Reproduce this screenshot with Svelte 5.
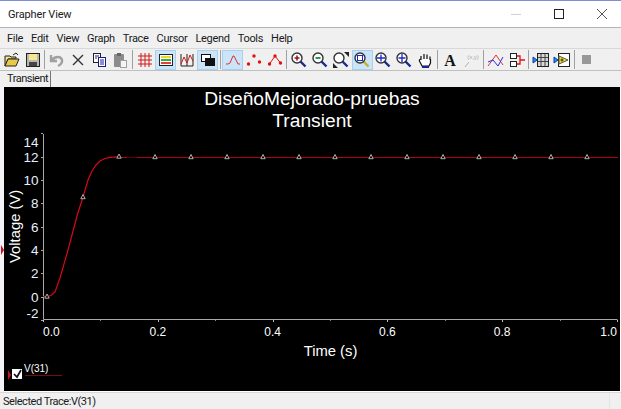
<script>
	const menus = ["File", "Edit", "View", "Graph", "Trace", "Cursor", "Legend", "Tools", "Help"]

	// null marks a separator
	const tools = [
		{ id: "open" }, { id: "save" }, null,
		{ id: "undo" }, { id: "cut" }, { id: "copy" }, { id: "paste" }, null,
		{ id: "grid" }, { id: "legend", on: true }, { id: "stack" }, { id: "overlay", on: true }, null,
		{ id: "line", on: true }, { id: "dots" }, { id: "both" }, null,
		{ id: "zoomin" }, { id: "zoomout" }, { id: "fit" }, { id: "zoombox", on: true }, { id: "zoomx" }, { id: "zoomy" }, { id: "hand" }, null,
		{ id: "text" }, { id: "xy" }, null,
		{ id: "traces" }, { id: "export" }, null,
		{ id: "table" }, { id: "wave" }, null,
		{ id: "stop" }
	]

	const x0 = 43, x1 = 617, y0 = 296.5, perVolt = 11.65
	const yTicks = [14, 12, 10, 8, 6, 4, 2, 0, -2]
	const xTicks = [0, 0.2, 0.4, 0.6, 0.8, 1]
	const xMinor = [0.1, 0.3, 0.5, 0.7, 0.9]
	const xPos = t => x0 + (x1 - x0) * t
	const yPos = v => y0 - v * perVolt

	const curve = "M43 296.5 L47 296.5 L51 295.5 L55 292 L60 278 L64 264 L68 250 L72 235 L77 216 L83 197 L88 180 L92 171 L96 165 L100 161 L105 158.5 L110 157.3 L118 156.8"
	const markers = [[47, 296.5], [83, 197], [119, 156.5]]
	for (let x = 155; x <= 587; x += 36) markers.push([x, 157])
</script>

<div class="window">
	<header class="titlebar">
		<span class="title">Grapher View</span>
		<div class="caption">
			<svg width="10" height="10" viewBox="0 0 10 10"><path d="M0 5.5H10" stroke="#d0d0d0" /></svg>
			<svg width="10" height="10" viewBox="0 0 10 10"><rect x="0.5" y="0.5" width="9" height="9" fill="none" stroke="#222" /></svg>
			<svg width="10" height="10" viewBox="0 0 10 10"><path d="M0 0L10 10M10 0L0 10" stroke="#555" /></svg>
		</div>
	</header>

	<nav class="menubar">
		{#each menus as m}
			<span>{m}</span>
		{/each}
	</nav>

	<div class="toolbar">
		{#each tools as t}
			{#if t === null}
				<i class="sep"></i>
			{:else}
				<button type="button" class:on={t.on}>
					<svg width="18" height="18" viewBox="0 0 18 18">
						{#if t.id === "open"}
							<path d="M2 5h5l1 1h5v2H5L2 15z" fill="#f2e28a" stroke="#222" />
							<path d="M5 8h11l-3 7H2z" fill="#e8c94a" stroke="#222" />
							<path d="M10 4l3-2 2 2" fill="none" stroke="#222" />
						{:else if t.id === "save"}
							<rect x="2.5" y="2.5" width="13" height="13" fill="#b8b8b0" stroke="#222" />
							<rect x="5" y="3" width="8" height="6" fill="#f4e890" />
							<rect x="5" y="11" width="8" height="4" fill="#444" />
						{:else if t.id === "undo"}
							<path d="M3 4v6h6M4 9c3-4 9-4 10 0 .6 3-2 5-4 6" fill="none" stroke="#a0a0a0" stroke-width="2.4" />
						{:else if t.id === "cut"}
							<path d="M4 4l10 10M14 4L4 14" stroke="#333" stroke-width="1.4" />
						{:else if t.id === "copy"}
							<rect x="3.5" y="2.5" width="7" height="9" fill="#fff" stroke="#222" />
							<rect x="8.5" y="6.5" width="7" height="9" fill="#fff" stroke="#1a1a90" />
							<path d="M10 9h4M10 11h4M10 13h4M5 5h4M5 7h2" stroke="#1a1a90" />
						{:else if t.id === "paste"}
							<rect x="3" y="3" width="10" height="13" rx="1" fill="#8c8c8c" />
							<rect x="6" y="2" width="4" height="3" fill="#666" />
							<rect x="9.5" y="9.5" width="6" height="7" fill="#f4f4f4" stroke="#a0a0a0" />
						{:else if t.id === "grid"}
							<path d="M5 2v14M9 2v14M13 2v14M2 5h14M2 9h14M2 13h14" stroke="#d01818" />
						{:else if t.id === "legend"}
							<rect x="2.5" y="3.5" width="13" height="11" fill="#fff" stroke="#222" />
							<rect x="4" y="5" width="10" height="2" fill="#e8d820" />
							<rect x="4" y="8" width="10" height="2" fill="#30b040" />
							<rect x="4" y="11" width="10" height="2" fill="#e04040" />
						{:else if t.id === "stack"}
							<path d="M3 3v12M9 3v12M15 3v12M3 15h12" stroke="#222" />
							<path d="M3 13l3-7 3 6 3-8 3 6" fill="none" stroke="#d01818" />
						{:else if t.id === "overlay"}
							<rect x="2.5" y="3.5" width="9" height="7" fill="#fff" stroke="#111" />
							<rect x="6" y="7" width="10" height="8" fill="#111" />
						{:else if t.id === "line"}
							<path d="M2 13h2l2-1 3-7 1 0 4 8h2" fill="none" stroke="#e03030" />
						{:else if t.id === "dots"}
							<g fill="#e01010"><circle cx="3.5" cy="13" r="1.7" /><circle cx="9" cy="5" r="1.7" /><circle cx="14.5" cy="11" r="1.7" /></g>
						{:else if t.id === "both"}
							<path d="M3.5 13L9 5l5.500 7" fill="none" stroke="#e01010" />
							<g fill="#e01010"><circle cx="3.5" cy="13" r="1.7" /><circle cx="9" cy="5" r="1.7" /><circle cx="14.500" cy="12" r="1.700" /></g>
						{:else if ["zoomin", "zoomout", "fit", "zoombox", "zoomx", "zoomy"].includes(t.id)}
							<path d="M10.500 10.500L15.500 15.500" stroke={t.id === "zoombox" ? "#c8b020" : "#1a2a90"} stroke-width="2.400" />
							<circle cx="7" cy="7" r="5" fill="#fff" stroke="#333" stroke-width="1.400" />
							{#if t.id === "zoomin"}
								<path d="M4.500 7h5M7 4.500v5" stroke="#a01030" stroke-width="1.600" />
							{:else if t.id === "zoomout"}
								<path d="M4.500 7h5" stroke="#109040" stroke-width="1.800" />
							{:else if t.id === "fit"}
								<path d="M12 1h5v5zM1 17v-5l5 5z" fill="#222" />
							{:else if t.id === "zoombox"}
								<rect x="4.500" y="4.500" width="5" height="5" fill="none" stroke="#1a2ad0" />
							{:else if t.id === "zoomx"}
								<path d="M3 7h8M7 3.500v7" stroke="#1a2ad0" stroke-width="1.300" />
							{:else}
								<path d="M7 3v8M3.500 7h7" stroke="#1a2ad0" stroke-width="1.300" />
							{/if}
						{:else if t.id === "hand"}
							<path d="M5 9V5M8 8V3M11 8V3.500M14 9V5.500M5 8c-2 0-2 2-1 3l2 4h7l1.500-3V8" fill="#fff" stroke="#111" stroke-width="1.200" />
							<path d="M6 16h7" stroke="#1a2a90" stroke-width="2" />
						{:else if t.id === "text"}
							<text x="9" y="15" text-anchor="middle" class="glyph">A</text>
						{:else if t.id === "xy"}
							<text x="11" y="8" text-anchor="middle" class="glyph-xy">(x,y)</text>
							<path d="M3 16l4-5" stroke="#b0b0b0" />
						{:else if t.id === "traces"}
							<path d="M1 15L9 4l7 10" fill="none" stroke="#e03030" />
							<path d="M1 11l5-2 5 6 5-9" fill="none" stroke="#2030e0" />
						{:else if t.id === "export"}
							<rect x="2.500" y="2.500" width="6" height="5" fill="#fff" stroke="#222" />
							<rect x="2.500" y="10.500" width="6" height="5" fill="#fff" stroke="#222" />
							<path d="M9 5h3v8H9M12 9h5" fill="none" stroke="#e01010" stroke-width="1.300" />
						{:else if t.id === "table"}
							<rect x="5.500" y="2.500" width="11" height="13" fill="#d8d8d8" stroke="#222" />
							<path d="M9 3v12M13 3v12M6 6.500h10M6 10.500h10" stroke="#444" />
							<path d="M1 6l4 3-4 3z" fill="#10a0d0" stroke="#1030c0" />
						{:else if t.id === "wave"}
							<rect x="5.500" y="2.500" width="11" height="13" fill="#fff" stroke="#222" />
							<path d="M6 5l9 4-9 4z" fill="#f4e020" stroke="#555" />
							<path d="M1 6l4 3-4 3z" fill="#10a0d0" stroke="#1030c0" />
							<path d="M9 7.500v3M7.500 9h3" stroke="#222" />
						{:else if t.id === "stop"}
							<rect x="4" y="4" width="9" height="9" fill="#989898" />
						{/if}
					</svg>
				</button>
			{/if}
		{/each}
	</div>

	<div class="tabs">
		<span class="tab">Transient</span>
	</div>

	<div class="plotrow">
		<i class="pointer"></i>
		<main class="plot">
			<svg width="616" height="304" viewBox="4 87 616 304">
				<text x="312" y="105" class="heading">DiseñoMejorado-pruebas</text>
				<text x="312" y="127" class="heading">Transient</text>

				<path d="M43.500 134V319.500H617.500" fill="none" stroke="#a8a8a8" />
				{#each yTicks as v}
					<path d="M41 {Math.round(yPos(v)) + 0.5}H43" stroke="#a8a8a8" />
				{/each}
				{#each xTicks as t}
					<path d="M{Math.round(xPos(t)) + 0.5} 320V322" stroke="#c0c0c0" />
				{/each}
				{#each xMinor as t}
					<path d="M{Math.round(xPos(t)) + 0.5} 320V321" stroke="#888" />
				{/each}

				{#each yTicks as v}
					<text x="38.500" y={(v === 14 ? 141.500 : v === -2 ? 312.500 : yPos(v)) + 5} class="tick ylab">{v}</text>
				{/each}
				{#each xTicks as t}
					<text
						x={t === 0 ? 43 : t === 1 ? 617 : xPos(t)}
						y="336"
						class="tick"
						text-anchor={t === 0 ? "start" : t === 1 ? "end" : "middle"}
					>{t.toFixed(1)}</text>
				{/each}

				<text x="330.500" y="356" class="axis" text-anchor="middle">Time (s)</text>
				<text transform="translate(20 263) rotate(-90)" class="axis">Voltage (V)</text>

				<path d="M118 157.500H618" stroke="#b00012" />
				<path d="M127 157.500H137" stroke="#600008" />
				<path d={curve} fill="none" stroke="#d80818" stroke-width="1.200" />
				{#each markers as [mx, my]}
					<path d="M{mx} {my - 2.500}l2.200 4.200h-4.400z" fill="#000" stroke="#b0b0b0" />
				{/each}

				<path d="M8 370l3 5-3 5z" fill="#d01020" />
				<rect x="12" y="369" width="10" height="10" fill="#fff" />
				<path d="M14 374l3 3 4-7" fill="none" stroke="#111" stroke-width="1.700" />
				<text x="24" y="372" class="legend">V(31)</text>
				<path d="M25 375.500H62" stroke="#7a0c10" />
			</svg>
		</main>
	</div>

	<footer class="status">
		<span>Selected Trace:V(31)</span>
		<i class="grip"></i>
	</footer>
</div>

<style>
	:global(body) {
		background: #f0f0f0;
		overflow: hidden;
	}
	.window {
		display: flex;
		flex-direction: column;
		width: 621px;
		height: 409px;
		font-family: Roboto, "Liberation Sans", Arial, sans-serif;
		font-size: 11px;
		color: #1a1a1a;
		background: #f0f0f0;
		overflow: hidden;
	}
	.titlebar {
		display: flex;
		align-items: center;
		justify-content: space-between;
		height: 26px;
		padding-left: 8px;
		background: #fff;
		border-top: 1px solid #7f8fd4;
		border-bottom: 1px solid #b4b4b4;
		flex: none;
	}
	.title {
		letter-spacing: -0.15px;
	}
	.caption {
		display: flex;
		gap: 33px;
		padding-right: 14px;
	}
	.caption svg {
		display: block;
	}
	.menubar {
		display: flex;
		align-items: center;
		gap: 8px;
		height: 20px;
		padding-left: 7px;
		letter-spacing: -0.3px;
		flex: none;
	}
	.toolbar {
		display: flex;
		align-items: center;
		height: 21px;
		padding-left: 1px;
		border-top: 1px solid #d8d8d8;
		border-bottom: 1px solid #c0c0c0;
		flex: none;
	}
	.toolbar button {
		display: flex;
		align-items: center;
		justify-content: center;
		width: 21px;
		height: 20px;
		padding: 0;
		border: 0;
		background: none;
		flex: none;
	}
	.toolbar button.on {
		background: #cce4f7;
		outline: 1px solid #a8d0f0;
		outline-offset: -1px;
	}
	.sep {
		width: 1px;
		height: 19px;
		margin: 0 1.35px;
		background: #a0a0a0;
		flex: none;
	}
	.glyph {
		font-family: "Liberation Serif", serif;
		font-weight: bold;
		font-size: 16px;
		fill: #111;
	}
	.glyph-xy {
		font-size: 6px;
		fill: #a8a8a8;
	}
	.tabs {
		display: flex;
		height: 16px;
		flex: none;
	}
	.tab {
		box-sizing: border-box;
		width: 51px;
		padding-left: 7px;
		border-right: 1px solid #777;
		line-height: 15px;
		letter-spacing: -0.5px;
	}
	.plotrow {
		position: relative;
		height: 305px;
		padding-left: 4px;
		border-left: 1px solid #c4c8e4;
		margin-left: -1px;
		flex: none;
		background: #f4f4f8;
	}
	.pointer {
		position: absolute;
		left: 1px;
		top: 158px;
		border-style: solid;
		border-width: 5px 0 5px 3px;
		border-color: transparent transparent transparent #d01020;
	}
	.plot {
		width: 616px;
		height: 304px;
		background: #000;
		overflow: hidden;
		border-right: 1px solid #fff;
		border-bottom: 1px solid #fff;
	}
	.plot svg {
		display: block;
		font-family: "Liberation Sans", Arial, sans-serif;
	}
	.heading {
		font-size: 19.200px;
		fill: #fff;
		text-anchor: middle;
	}
	.tick {
		font-size: 12px;
		fill: #fff;
	}
	.ylab {
		text-anchor: end;
		fill: #e4f0ff;
		font-size: 13.500px;
	}
	.axis {
		font-size: 14.800px;
		fill: #fff;
	}
	.legend {
		font-size: 10px;
		fill: #fff;
	}
	.status {
		display: flex;
		justify-content: space-between;
		flex: 1;
		border-top: 1px solid #d8d8d8;
		padding-left: 3px;
		line-height: 17px;
		letter-spacing: -0.45px;
	}
	.grip {
		width: 11px;
		border-left: 1px solid #e4e4e4;
	}
</style>
